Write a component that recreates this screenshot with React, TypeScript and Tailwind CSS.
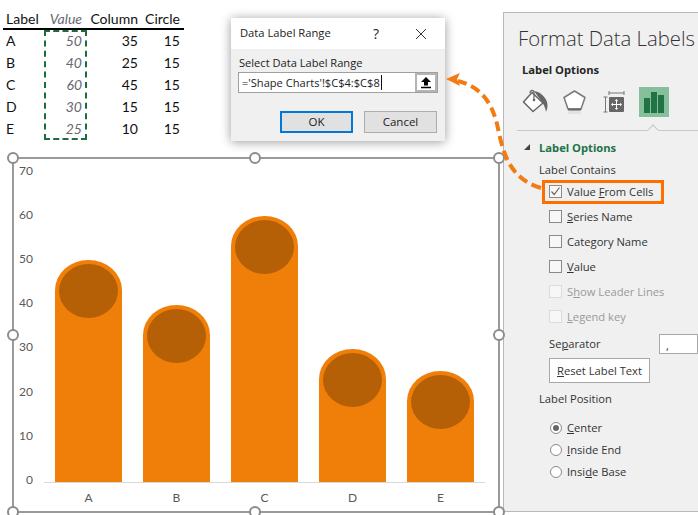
const rows = [
  ["A", 50, 35, 15],
  ["B", 40, 25, 15],
  ["C", 60, 45, 15],
  ["D", 30, 15, 15],
  ["E", 25, 10, 15],
]

const bars = [
  { label: "A", x: 55, top: 260 },
  { label: "B", x: 143, top: 305 },
  { label: "C", x: 231, top: 216 },
  { label: "D", x: 319, top: 349 },
  { label: "E", x: 407, top: 371 },
]

const ticks = [70, 60, 50, 40, 30, 20, 10, 0]

function Handle({ className }: { className: string }) {
  return <div className={`absolute w-[12px] h-[12px] rounded-full bg-white border-2 border-[#8c8c8c] ${className}`} />
}

function DataTable() {
  return (
    <div className="ml-[3px] w-[181px] h-[140px] pt-[8px] font-['Lato',sans-serif] text-[14px] leading-[22px] text-[#111]">
      <div className="grid grid-cols-[41px_38px_56px_42px] h-[22px] border-b-2 border-black -mb-[1px] w-[181px]">
        <span className="pl-[3px]">Label</span>
        <span className="text-right italic text-[#68686f]">Value</span>
        <span className="text-right">Column</span>
        <span className="text-right">Circle</span>
      </div>
      <div className="relative pt-[1px]">
        <div className="absolute left-[41px] top-[1px] w-[43px] h-[110px] border-2 border-dashed border-[#1e6b41]" />
        {rows.map((r) => (
          <div key={r[0]} className="grid grid-cols-[41px_38px_56px_42px] h-[22px]">
            <span className="pl-[3px]">{r[0]}</span>
            <span className="text-right italic text-[#68686f]">{r[1]}</span>
            <span className="text-right">{r[2]}</span>
            <span className="text-right">{r[3]}</span>
          </div>
        ))}
      </div>
    </div>
  )
}

function Chart() {
  // svg coordinates are page coordinates minus the frame's inner corner (14, 159)
  return (
    <div className="relative ml-[12px] mt-[17px] w-[488px] h-[356px] border-2 border-[#9a9a9a] bg-white">
      <svg width="484" height="352" viewBox="14 159 484 352" className="block font-['Lato',sans-serif]">
        {ticks.map((t, i) => (
          <text key={t} x="33" y={174.5 + i * 44.2} textAnchor="end" fontSize="12" fill="#595959">
            {t}
          </text>
        ))}
        <line x1="44" y1="482.5" x2="485" y2="482.5" stroke="#d9d9d9" />
        {bars.map((b) => (
          <g key={b.label}>
            <path
              d={`M${b.x} 482 V${b.top + 30} A33.5 30 0 0 1 ${b.x + 67} ${b.top + 30} V482 Z`}
              fill="#f07f09"
            />
            <ellipse cx={b.x + 33.5} cy={b.top + 31} rx="29.5" ry="27" fill="#b56006" />
            <text x={b.x + 33.5} y="501.5" textAnchor="middle" fontSize="12" fill="#595959">
              {b.label}
            </text>
          </g>
        ))}
      </svg>
      <Handle className="-left-[7px] -top-[7px]" />
      <Handle className="left-[235px] -top-[7px]" />
      <Handle className="-right-[7px] -top-[7px]" />
      <Handle className="-left-[7px] top-[170px]" />
      <Handle className="-right-[7px] top-[170px]" />
      <Handle className="-left-[7px] -bottom-[7px]" />
      <Handle className="left-[235px] -bottom-[7px]" />
      <Handle className="-right-[7px] -bottom-[7px]" />
    </div>
  )
}

function Dialog() {
  return (
    <div className="absolute left-[231px] top-[18px] w-[214px] h-[123px] bg-[#f0f0f0] shadow-[0_1px_10px_rgba(0,0,0,0.4)] font-['Open_Sans',sans-serif] text-[#222]">
      <div className="h-[31px] bg-white flex items-center pl-[9px] text-[11.2px]">
        <span className="w-[132px]">Data Label Range</span>
        <span className="text-[14px] w-[44px] pl-[1px]">?</span>
        <svg width="12" height="12" viewBox="0 0 12 12" className="ml-[-1px]">
          <path d="M1 1 L11 11 M11 1 L1 11" stroke="#333" strokeWidth="1" fill="none" />
        </svg>
      </div>
      <div className="pl-[7px] pt-[6px] text-[11.1px] leading-[16px] w-[207px]">
        <div className="pl-[1px]">Select Data Label Range</div>
        <div className="mt-[1px] h-[21px] w-[200px] bg-white border border-[#a0a0a0] flex items-center justify-between">
          <span className="pl-[3px] text-[11.1px] border-r border-[#111] pr-[1px] leading-[15px]">='Shape Charts'!$C$4:$C$8</span>
          <div className="w-[22px] h-[19px] border-2 border-[#b4b4b4] bg-white flex items-center justify-center">
            <svg width="12" height="13" viewBox="0 0 12 13">
              <path d="M6 1 L11 6 H8 V9.5 H4 V6 H1 Z" fill="#000" />
              <path d="M1 11.5 H11" stroke="#000" strokeWidth="1.5" />
            </svg>
          </div>
        </div>
        <div className="mt-[18px] flex pl-[42px] gap-[11px]">
          <button className="w-[73px] h-[22px] bg-[#e1e1e1] border-2 border-[#0078d7] text-[11.5px]">OK</button>
          <button className="w-[73px] h-[22px] bg-[#e1e1e1] border border-[#adadad] text-[11.5px]">Cancel</button>
        </div>
      </div>
    </div>
  )
}

function Check({ label, checked, disabled }: { label: React.ReactNode; checked?: boolean; disabled?: boolean }) {
  return (
    <div className={`flex items-center h-[25px] pl-[45px] ${disabled ? "text-[#9a9a9a]" : ""}`}>
      <div className={`w-[13px] h-[13px] border ${disabled ? "border-[#dcdcdc]" : "border-[#8a8a8a]"} bg-[#f7f7f7] flex items-center justify-center`}>
        {checked && (
          <svg width="11" height="11" viewBox="0 0 11 11">
            <path d="M1.5 5.5 L4.2 8.5 L9.5 1.5" stroke="#666" strokeWidth="1.2" fill="none" />
          </svg>
        )}
      </div>
      <span className="ml-[5px]">{label}</span>
    </div>
  )
}

function Radio({ label, on }: { label: React.ReactNode; on?: boolean }) {
  return (
    <div className="flex items-center h-[22px] pl-[46px]">
      <div className="w-[12px] h-[12px] rounded-full border border-[#8a8a8a] bg-white flex items-center justify-center">
        {on && <div className="w-[6px] h-[6px] rounded-full bg-[#666]" />}
      </div>
      <span className="ml-[5px]">{label}</span>
    </div>
  )
}

function PaneIcons() {
  return (
    <div className="flex items-start ml-[18px] mt-[9px] h-[30px]">
      {/* fill and line */}
      <svg width="27" height="26" viewBox="0 0 27 26" className="mt-[2px]">
        <path d="M12 2 C18 3 23 7 25 13 C26 16 25.500 20 24 23 C23.500 19 22 16 20 13 Z" fill="#666" />
        <path d="M1.500 13 L10 3.500 L21 14 L11 22.500 Z" fill="#fff" stroke="#666" strokeWidth="1.500" strokeLinejoin="round" />
        <path d="M8 4 C8 0.500 12 0.500 12 4 V10" fill="none" stroke="#666" strokeWidth="1.200" />
        <circle cx="12" cy="11" r="1.300" fill="#666" />
      </svg>
      {/* effects */}
      <svg width="23" height="25" viewBox="0 0 23 25" className="ml-[14px] mt-[3px]">
        <path d="M6 20 H17 L18 24 H5 Z" fill="#e2e2e2" />
        <path d="M11.500 1 L22 7.500 L18 19 H5 L1 7.500 Z" fill="#fff" stroke="#7a7a7a" strokeWidth="1.500" strokeLinejoin="round" />
        <path d="M5 19.500 H18" stroke="#666" strokeWidth="2" />
      </svg>
      {/* size and properties */}
      <svg width="23" height="23" viewBox="0 0 23 23" className="ml-[17px] mt-[4px]">
        <path d="M6 2 H21 M6 0 V4 M21 0 V4 M0.500 6 H4.500 M0.500 21 H4.500 M2.500 6 V21" stroke="#777" strokeWidth="1" fill="none" />
        <rect x="6" y="6" width="15" height="15" rx="1" fill="#666" />
        <path d="M13.500 9 V18 M9 13.500 H18" stroke="#fff" strokeWidth="1" />
        <path d="M13.500 8 L11.800 10 H15.200 Z M13.500 19 L11.800 17 H15.200 Z M8 13.500 L10 11.800 V15.200 Z M19 13.500 L17 11.800 V15.200 Z" fill="#fff" />
      </svg>
      {/* label options */}
      <div className="ml-[13px] w-[30px] h-[30px] bg-[#86bf9c] flex items-center justify-center">
        <svg width="20" height="21" viewBox="0 0 20 21">
          <path d="M0 6 H6 V21 H0 Z M7 0 H13 V21 H7 Z M14 3 H20 V21 H14 Z" fill="#217346" />
        </svg>
      </div>
    </div>
  )
}

function Pane() {
  return (
    <div className="mt-[12px] mb-[3px] ml-[3px] flex-1 bg-[#f0f0f0] border border-[#b8b8b8] border-r-0 font-['Open_Sans',sans-serif] text-[11.2px] leading-[16px] text-[#333] overflow-hidden">
      <div className="pl-[14px] pt-[10px] text-[20.3px] leading-[30px] font-light text-[#333] whitespace-nowrap">Format Data Labels</div>
      <div className="pl-[18px] mt-[9px] font-bold text-[#262626]">Label Options</div>
      <PaneIcons />
      <div className="relative ml-[13px] mt-[13px] h-px bg-[#c8c8c8]">
        <div className="absolute left-[132px] -top-[4px] w-[8px] h-[8px] rotate-45 bg-[#f0f0f0] border-l border-t border-[#c8c8c8]" />
      </div>
      <div className="relative flex items-center pl-[35px] mt-[9px] h-[16px] font-bold text-[#217346]">
        <span className="absolute left-[20px] top-[4px] w-0 h-0 border-l-[6px] border-l-transparent border-b-[6px] border-b-[#444]" />
        Label Options
      </div>
      <div className="pl-[35px] mt-[6px]">Label Contains</div>
      <div className="relative mt-[1px]">
        <div className="absolute left-[38px] top-[1px] w-[122px] h-[24px] border-[3px] border-[#ff6f00]" />
        <Check checked label={<>Value <u>F</u>rom Cells</>} />
        <Check label={<><u>S</u>eries Name</>} />
        <Check label={<>Cate<u>g</u>ory Name</>} />
        <Check label={<><u>V</u>alue</>} />
        <Check disabled label={<>S<u>h</u>ow Leader Lines</>} />
        <Check disabled label={<><u>L</u>egend key</>} />
      </div>
      <div className="flex items-center pl-[45px] mt-[4px] h-[21px]">
        <span className="w-[110px]">Se<u>p</u>arator</span>
        <div className="flex-1 h-[20px] bg-white border border-[#a8a8a8] pl-[6px] leading-[22px]">,</div>
      </div>
      <div className="ml-[45px] mt-[4px] w-[101px] h-[25px] bg-white border border-[#a8a8a8] flex items-center justify-center">
        <span><u>R</u>eset Label Text</span>
      </div>
      <div className="pl-[35px] mt-[8px]">Label Position</div>
      <div className="mt-[10px]">
        <Radio on label={<><u>C</u>enter</>} />
        <Radio label={<><u>I</u>nside End</>} />
        <Radio label={<>Insi<u>d</u>e Base</>} />
      </div>
    </div>
  )
}

export default function App() {
  return (
    <div className="relative w-[698px] h-[515px] overflow-hidden bg-white flex">
      <div className="w-[500px] shrink-0">
        <DataTable />
        <Chart />
      </div>
      <Pane />
      <Dialog />
      <svg width="698" height="515" viewBox="0 0 698 515" className="absolute left-0 top-0 pointer-events-none">
        <path
          d="M541 188 C506 178 502 146 497 124 C490 96 476 86 458 81"
          fill="none"
          stroke="#f47a12"
          strokeWidth="4"
          strokeDasharray="10 5"
        />
        <path d="M446 79 L460 73 L457 79 L460 86 Z" fill="#f47a12" />
      </svg>
    </div>
  )
}
